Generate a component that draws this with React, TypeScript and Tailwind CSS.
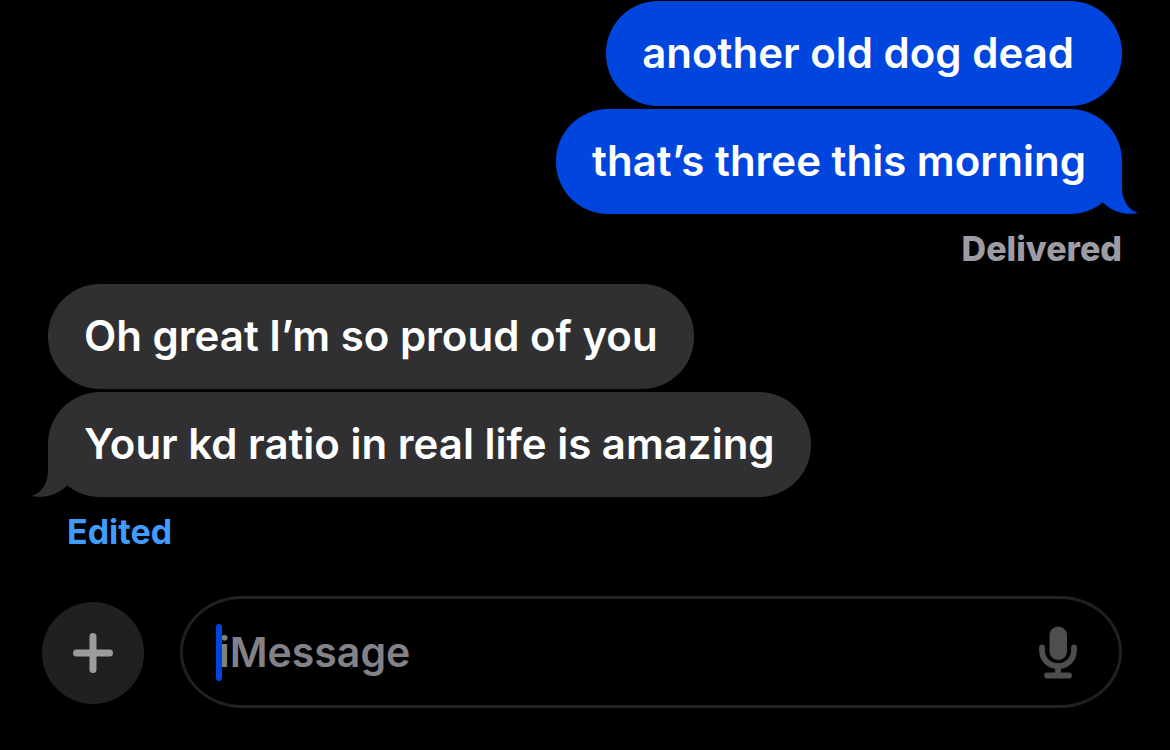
import React from "react";
import clsx from "clsx";

interface BubbleProps {
  children: React.ReactNode;
  sent?: boolean;
  tail?: boolean;
}

const Tail: React.FC<{ sent?: boolean }> = ({ sent }) => (
  <svg
    viewBox="0 0 40 56"
    aria-hidden="true"
    className={clsx(
      "absolute bottom-0 w-10 h-14",
      sent ? "-right-4 fill-[#0046de]" : "-left-4 -scale-x-100 fill-[#303032]"
    )}
  >
    <path d="M0 0H24V30C24 43 31 52 40 55C27 58 13 53 4.500 44L0 40Z" />
  </svg>
);

const Bubble: React.FC<BubbleProps> = ({ children, sent, tail }) => (
  <li
    className={clsx(
      "relative max-w-[80%] rounded-[52px] pl-9 pt-[25px] pb-[27px] text-[42px] leading-[53px] font-semibold text-white",
      sent ? "self-end bg-[#0046de]" : "self-start bg-[#303032]",
      sent && !tail ? "pr-12" : "pr-9"
    )}
  >
    {tail && <Tail sent={sent} />}
    <span className="relative">{children}</span>
  </li>
);

const PlusIcon: React.FC = () => (
  <svg viewBox="0 0 40 40" className="w-10 h-10" aria-hidden="true">
    <path
      d="M20 3.500V36.500M3.500 20H36.500"
      stroke="#9c9c9f"
      strokeWidth="7"
      strokeLinecap="round"
    />
  </svg>
);

const MicIcon: React.FC = () => (
  <svg viewBox="0 0 38 53" className="w-[38px] h-[53px]" aria-hidden="true">
    <rect x="10.500" y="0.500" width="17.500" height="33.500" rx="8.700" fill="#4e4e50" />
    <path
      d="M3 21.500V24C3 33.500 10 40 19 40S35 33.500 35 24V21.500M19 40V49M8 49.500H30"
      fill="none"
      stroke="#4e4e50"
      strokeWidth="5.800"
      strokeLinecap="round"
    />
  </svg>
);

const App: React.FC = () => {
  return (
    <main className="min-h-screen bg-black pt-px pb-10 font-['Inter',sans-serif]">
      <section className="px-12" aria-label="Conversation">
        <ul className="flex flex-col gap-[3px]">
          <Bubble sent>another old dog dead</Bubble>
          <Bubble sent tail>
            that’s three this morning
          </Bubble>
        </ul>
        <p className="mt-[14px] text-right text-[34px] leading-[42px] font-extrabold text-[#9d9ca4]">
          Delivered
        </p>
        <ul className="mt-[14px] flex flex-col gap-[3px]">
          <Bubble>Oh great I’m so proud of you</Bubble>
          <Bubble tail>Your kd ratio in real life is amazing</Bubble>
        </ul>
        <button
          type="button"
          className="mt-[14px] ml-[19px] block text-[34px] leading-[42px] font-bold text-[#409cff]"
        >
          Edited
        </button>
      </section>

      <form
        className="mt-[43px] flex items-end gap-9 pl-[42px] pr-12"
        onSubmit={(e) => e.preventDefault()}
      >
        <button
          type="button"
          aria-label="Add attachment"
          className="mb-1 flex size-[102px] shrink-0 items-center justify-center rounded-full bg-[#202022]"
        >
          <PlusIcon />
        </button>
        <div className="relative flex h-28 min-w-0 flex-1 items-center rounded-[62px/56px] border-3 border-[#212123] pl-9 pr-[42px]">
          <input
            type="text"
            aria-label="Message"
            placeholder="iMessage"
            className="min-w-0 flex-1 bg-transparent text-[41px] leading-[53px] font-semibold text-white caret-transparent outline-none placeholder:text-[#838288]"
          />
          <span className="absolute left-[33px] h-[57px] w-[6px] rounded-full bg-[#0046de]" />
          <button type="button" aria-label="Dictate">
            <MicIcon />
          </button>
        </div>
      </form>
    </main>
  );
};

export default App;
